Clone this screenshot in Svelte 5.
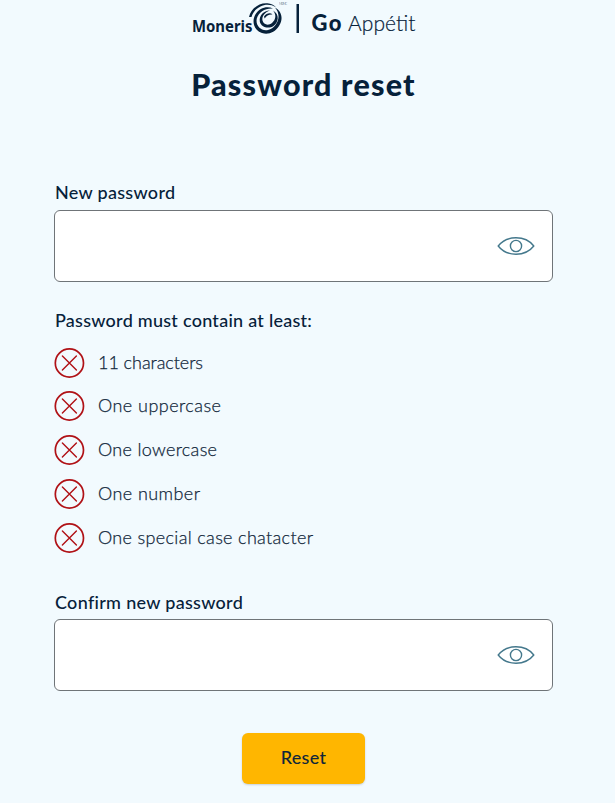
<script>
  const rules = [
    { text: '11 characters', width: 105 },
    { text: 'One uppercase', width: 123 },
    { text: 'One lowercase', width: 119 },
    { text: 'One number', width: 102 },
    { text: 'One special case chatacter', width: 215 }
  ];
  let first = $state('');
  let second = $state('');
  let showFirst = $state(false);
  let showSecond = $state(false);
</script>

{#snippet eye()}
  <svg width="38" height="20" viewBox="0 0 38 20" fill="none" stroke="#44788c" stroke-width="1.4">
    <path d="M1.2 10C5.5 4.5 11.8 1.8 19 1.8S32.500 4.500 36.800 10C32.500 15.500 26.200 18.200 19 18.200S5.500 15.500 1.200 10Z" stroke-linejoin="round" />
    <circle cx="19" cy="10" r="5.600" />
  </svg>
{/snippet}

<main>
  <header>
    <svg class="logo" width="224" height="40" viewBox="0 0 224 40" fill="#06213a" role="img" aria-label="Moneris Go Appétit">
      <text x="0" y="32" font-size="15.500" font-weight="700" font-family="Noto Sans, sans-serif" textLength="60.500" lengthAdjust="spacingAndGlyphs">Moneris</text>
      <path d="M57 17C59 8.500 67 2.500 75.500 3.200C79 3.500 82 5 84 7.200C79 4 73 4 68.500 6.500C63 9.300 61 12.500 59.500 17Z" />
      <path d="M83 7.500C90 11.500 91.500 19 87 26C83 32.500 76 35 70 33C61.500 30.200 59.500 21 63.500 14.200C67.500 7.800 75 5.500 81 8.500C73.500 7.800 66.500 12 64.800 18.500C63.200 25.500 69 31.500 76 30C85 27.500 90.500 16 83 7.500Z" />
      <path d="M81 10.500C88 14.500 86.500 22.500 81.500 26C76.500 29.300 69 27.300 67.800 21.500C67 15.500 71.500 10.500 78 10.500C72.500 12.500 69.700 16.500 70.500 20.500C71.500 25 76.500 25.800 80 23C84 19.500 84.500 14.500 81 10.500Z" />
      <path d="M72 16.500C74.500 13 78.500 12.500 80.500 14.500C77.500 14 74.500 15.300 72.700 18.500Z" />
      <text x="87" y="5" font-size="3.500" opacity=".45" font-family="Lato, sans-serif" textLength="8">MD/MC</text>
      <rect x="104.500" y="4" width="2.500" height="29" />
      <text x="119.500" y="30.500" font-size="22" font-weight="900" font-family="Lato, sans-serif" textLength="30">Go</text>
      <text x="156" y="30.500" font-size="21" font-weight="300" font-family="Lato, sans-serif" textLength="67.500" stroke="#06213a" stroke-width=".2">Appétit</text>
    </svg>
    <h1>Password reset</h1>
  </header>

  <form onsubmit={(e) => e.preventDefault()}>
    <label for="new-password">New password</label>
    <div class="field">
      <input id="new-password" type={showFirst ? 'text' : 'password'} bind:value={first} />
      <button class="eye" type="button" aria-label="Show password" onclick={() => (showFirst = !showFirst)}>{@render eye()}</button>
    </div>

    <p>Password must contain at least:</p>
    <ul>
      {#each rules as rule}
        <li>
          <svg width="31" height="30" viewBox="0 0 31 30" fill="none" stroke="#b01116">
            <circle cx="15.400" cy="15" r="14.100" stroke-width="1.700" />
            <path d="M8.400 8L22.400 22M22.400 8L8.400 22" stroke-width="1.400" stroke-linecap="round" />
          </svg>
          <svg class="rule" width={rule.width} height="26" fill="#10263a" stroke="#10263a" stroke-width=".25">
            <text x="0" y="19" textLength={rule.width}>{rule.text}</text>
          </svg>
        </li>
      {/each}
    </ul>

    <label class="confirm" for="confirm-password">Confirm new password</label>
    <div class="field">
      <input id="confirm-password" type={showSecond ? 'text' : 'password'} bind:value={second} />
      <button class="eye" type="button" aria-label="Show password" onclick={() => (showSecond = !showSecond)}>{@render eye()}</button>
    </div>

    <button class="reset" type="submit">Reset</button>
  </form>
</main>

<style>
  :global(body) { background: #f2fafe; }
  main {
    box-sizing: border-box;
    height: 803px;
    padding: 0 62px 0 54px;
    overflow: hidden;
    background: #f2fafe;
    color: #06213a;
    font-family: Lato, sans-serif;
    font-size: 18px;
  }
  header { display: flex; flex-direction: column; align-items: center; height: 179px; }
  .logo { flex: none; }
  h1 { margin: 26px 0 0; font-size: 30.500px; line-height: 36px; font-weight: 900; letter-spacing: 1.200px; white-space: nowrap; }
  form { display: flex; flex-direction: column; }
  label, p { height: 26px; margin: 0 0 0 1px; line-height: 26px; font-weight: 500; letter-spacing: .3px; }
  label { margin-bottom: 5px; }
  .field { box-sizing: border-box; display: flex; align-items: center; height: 72px; padding-right: 17px; border: 1px solid #6f7478; border-radius: 6px; background: #fff; }
  input { flex: 1; min-width: 0; height: 60px; border: 0; outline: 0; background: transparent; font: inherit; padding: 0 16px; }
  .eye { display: flex; padding: 0; border: 0; background: none; }
  p { margin-top: 25px; letter-spacing: .26px; }
  ul { display: flex; flex-direction: column; gap: 13.750px; margin: 14.500px 0 0; padding: 0; list-style: none; }
  li { display: flex; align-items: center; gap: 13px; height: 30px; }
  li:nth-child(2), li:nth-child(3) { margin: -.4px 0 .4px; }
  .rule { overflow: visible; font-family: Lato, sans-serif; font-size: 18px; font-weight: 300; }
  .confirm { margin: 36.500px 0 4px 1px; }
  .reset { align-self: center; width: 123px; height: 51px; margin-top: 42px; padding: 0 0 3px; border: 0; border-radius: 6px; background: #ffb600; color: #10263a; box-shadow: 0 1px 2px #8794a866; font: 500 18px Lato, sans-serif; letter-spacing: .3px; }
</style>
